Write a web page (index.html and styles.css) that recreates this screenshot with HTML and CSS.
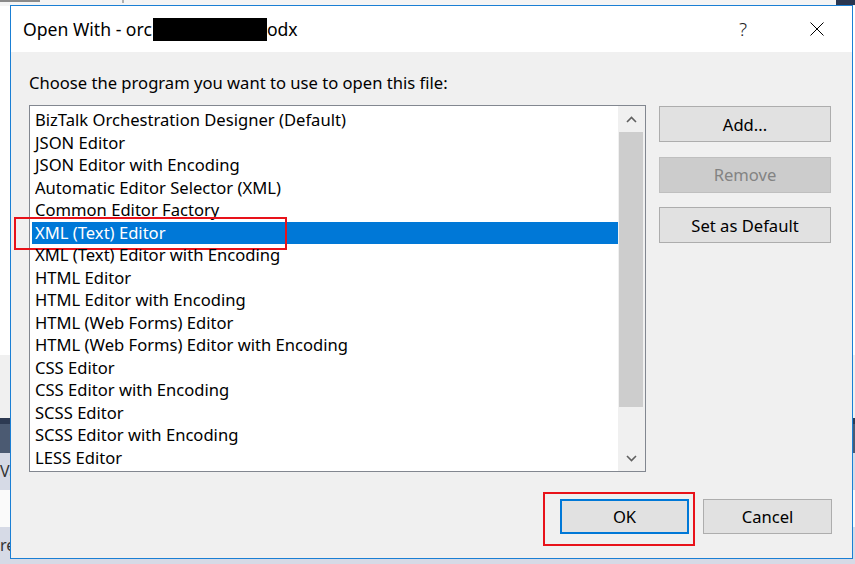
FILE: index.html
```html
<!DOCTYPE html>
<html>
<head>
<meta charset="utf-8">
<title>Open With</title>
<link rel="stylesheet" href="styles.css">
</head>
<body>
<div class="desk">
  <div class="band b-top"><span class="tick t1"></span><span class="tick t2"></span><span class="tick t3"></span></div>
  <div class="band b-white"></div>
  <div class="band b-grey"></div>
  <div class="band b-navy"></div>
  <div class="band b-slate"></div>
  <div class="band b-lav"><span class="frag">Va</span></div>
  <div class="band b-white2"></div>
  <div class="band b-lav2"><span class="frag">re</span></div>
</div>

<div class="dialog">
  <div class="titlebar">
    <div class="title">Open With - orc<span class="redact"></span>odx</div>
    <div class="tb-help">?</div>
    <div class="tb-close">
      <svg width="14" height="14" viewBox="0 0 14 14"><path d="M0.5 0.5 L13.5 13.5 M13.5 0.5 L0.5 13.5" stroke="#000" stroke-width="1" fill="none"/></svg>
    </div>
  </div>
  <div class="body">
    <div class="prompt">Choose the program you want to use to open this file:</div>
    <div class="main">
      <div class="listbox">
        <ul class="items">
          <li>BizTalk Orchestration Designer (Default)</li>
          <li>JSON Editor</li>
          <li>JSON Editor with Encoding</li>
          <li>Automatic Editor Selector (XML)</li>
          <li>Common Editor Factory</li>
          <li class="sel">XML (Text) Editor<span class="mark mark-list"></span></li>
          <li>XML (Text) Editor with Encoding</li>
          <li>HTML Editor</li>
          <li>HTML Editor with Encoding</li>
          <li>HTML (Web Forms) Editor</li>
          <li>HTML (Web Forms) Editor with Encoding</li>
          <li>CSS Editor</li>
          <li>CSS Editor with Encoding</li>
          <li>SCSS Editor</li>
          <li>SCSS Editor with Encoding</li>
          <li>LESS Editor</li>
        </ul>
        <div class="scroll">
          <div class="arrow">
            <svg width="11" height="7" viewBox="0 0 11 7"><path d="M1 6 L5.5 1.5 L10 6" stroke="#606060" stroke-width="1.6" fill="none"/></svg>
          </div>
          <div class="thumb"></div>
          <div class="track"></div>
          <div class="arrow">
            <svg width="11" height="7" viewBox="0 0 11 7"><path d="M1 1 L5.5 5.5 L10 1" stroke="#606060" stroke-width="1.6" fill="none"/></svg>
          </div>
        </div>
      </div>
      <div class="side">
        <button class="btn wide">Add...</button>
        <button class="btn wide disabled">Remove</button>
        <button class="btn wide">Set as Default</button>
      </div>
    </div>
    <div class="footer">
      <button class="btn foot default">OK<span class="mark mark-ok"></span></button>
      <button class="btn foot">Cancel</button>
    </div>
  </div>
</div>
</body>
</html>
```

FILE: styles.css
```css
html, body {
  margin: 0;
  padding: 0;
}
body {
  width: 855px;
  height: 564px;
  overflow: hidden;
  position: relative;
  font-family: "Noto Sans", "Open Sans", sans-serif;
  background: #ffffff;
}

/* desktop backdrop */
.desk {
  display: flex;
  flex-direction: column;
  height: 564px;
}
.band { position: relative; }
.b-top { height: 6px; background: #f4f4f4; }
.tick { position: absolute; top: 0; height: 3px; }
.t1 { left: 0; width: 40px; background: #8a8a8a; height: 2px; }
.t2 { left: 122px; width: 2px; background: #b0b0b0; }
.t3 { left: 836px; width: 19px; background: #2a3650; height: 5px; }
.b-white { height: 349px; background: #ffffff; }
.b-grey { height: 63px; background: #f0f0f0; }
.b-navy { height: 6px; background: #2d3a52; }
.b-slate { height: 29px; background: #4b5a72; }
.b-lav { height: 37px; background: #d6dae6; }
.b-white2 { height: 37px; background: #fafafa; }
.b-lav2 { flex: 1; background: #d6dae6; }
.frag {
  position: absolute;
  left: 0;
  top: 7px;
  font-size: 16px;
  color: #333;
}

/* dialog window */
.dialog {
  position: absolute;
  left: 10px;
  top: 5px;
  width: 841px;
  height: 552px;
  border: 1px solid #1a7fd4;
  background: #f0f0f0;
  display: flex;
  flex-direction: column;
}
.titlebar {
  height: 46px;
  background: #ffffff;
  display: flex;
  align-items: center;
  flex-shrink: 0;
}
.title {
  font-size: 17.6px;
  color: #000;
  padding-left: 12px;
  flex: 1;
  display: flex;
  align-items: center;
  white-space: nowrap;
}
.redact {
  display: inline-block;
  width: 114px;
  height: 23px;
  background: #000;
  margin-left: 1px;
}
.tb-help {
  font-size: 19px;
  font-weight: 300;
  color: #222;
  width: 20px;
  margin-right: 51px;
}
.tb-close {
  width: 14px;
  height: 14px;
  margin-right: 28px;
  display: flex;
}

.body {
  flex: 1;
  display: flex;
  flex-direction: column;
  padding: 0 0 0 18px;
}
.prompt {
  font-size: 16.6px;
  color: #000;
  margin-top: 20px;
  height: 22px;
  line-height: 22px;
  white-space: nowrap;
}
.main {
  display: flex;
  margin-top: 11px;
}
.listbox {
  width: 615px;
  height: 365px;
  border: 1px solid #828790;
  background: #fff;
  display: flex;
}
.items {
  list-style: none;
  margin: 0;
  padding: 3px 0 0 2px;
  flex: 1;
}
.items li {
  position: relative;
  height: 22.5px;
  line-height: 22px;
  font-size: 16.6px;
  padding-left: 3px;
  color: #000;
  white-space: nowrap;
}
.items li.sel {
  background: #0078d7;
  color: #fff;
}
.scroll {
  width: 27px;
  background: #f0f0f0;
  display: flex;
  flex-direction: column;
}
.arrow {
  height: 26px;
  display: flex;
  align-items: center;
  justify-content: center;
}
.thumb {
  height: 275px;
  margin: 0 2px 0 1px;
  background: #cdcdcd;
}
.track { flex: 1; }

.side {
  display: flex;
  flex-direction: column;
  gap: 14.5px;
  margin-left: 13px;
  padding-top: 1px;
}
.btn {
  font-family: "Noto Sans", "Open Sans", sans-serif;
  font-size: 16.6px;
  color: #000;
  background: #e1e1e1;
  border: 1px solid #adadad;
  padding: 0;
  margin: 0;
  position: relative;
}
.wide {
  width: 172px;
  height: 36px;
}
.btn.disabled {
  background: #cccccc;
  border-color: #bfbfbf;
  color: #838383;
}
.footer {
  display: flex;
  justify-content: flex-end;
  gap: 14px;
  margin-top: 27px;
  padding-right: 20px;
}
.foot {
  width: 129px;
  height: 35px;
}
.foot.default {
  border: 2px solid #0078d7;
}

/* red annotation marks */
.mark {
  position: absolute;
  border: 2px solid #e8121a;
  pointer-events: none;
}
.mark-list {
  left: -18px;
  top: -5px;
  width: 269px;
  height: 29px;
}
.mark-ok {
  left: -19px;
  top: -9px;
  width: 148px;
  height: 50px;
}
```
